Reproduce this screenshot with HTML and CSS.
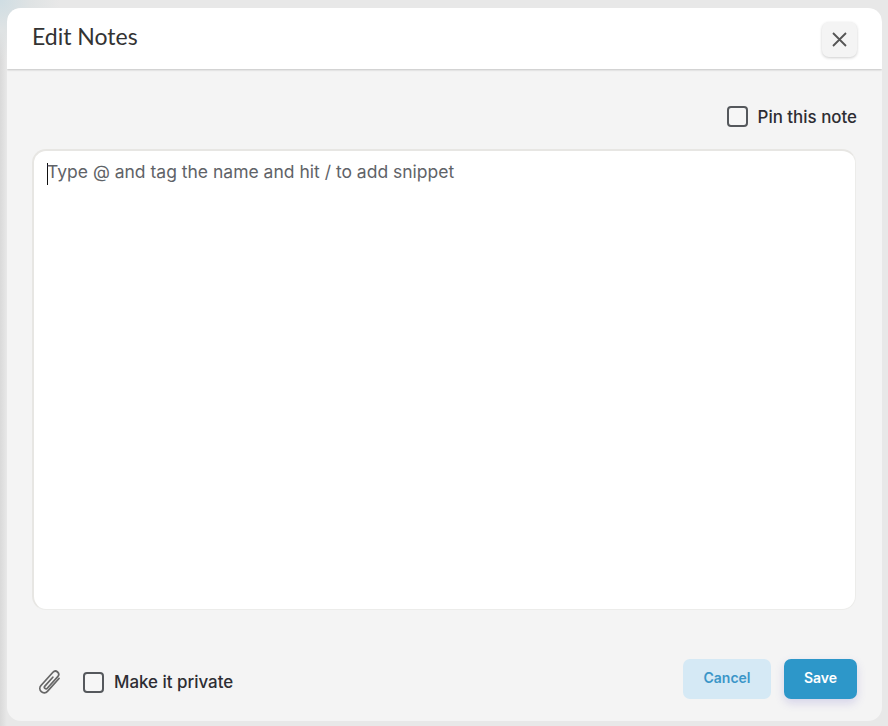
FILE: index.html
```html
<!DOCTYPE html>
<html lang="en">
<head>
<meta charset="utf-8">
<title>Edit Notes</title>
<link rel="stylesheet" href="styles.css">
</head>
<body>
<div class="modal">
  <header class="modal-header">
    <h1 class="modal-title">Edit Notes</h1>
    <button class="close-btn" aria-label="Close">
      <svg width="15" height="15" viewBox="0 0 15 15"><path d="M1 1 14 14M14 1 1 14" fill="none" stroke="#555" stroke-width="1.8"/></svg>
    </button>
  </header>
  <main class="modal-body">
    <div class="pin-row">
      <label class="check"><span class="box"></span><span>Pin this note</span></label>
    </div>
    <div class="editor">
      <span class="caret"></span><span class="placeholder">Type @ and tag the name and hit / to add snippet</span>
    </div>
    <footer class="modal-footer">
      <div class="footer-left">
        <svg class="clip" width="26" height="26" viewBox="1 1 24 24"><path d="M17 5V21a4 4 0 0 1-8 0V4.5a3 3 0 0 1 6 0V19a1.5 1.5 0 0 1-3 0V8" transform="rotate(42 13 13)" fill="none" stroke="#666" stroke-width="1.6" stroke-linecap="round"/></svg>
        <label class="check"><span class="box"></span><span>Make it private</span></label>
      </div>
      <div class="footer-right">
        <button class="btn btn-cancel">Cancel</button>
        <button class="btn btn-save">Save</button>
      </div>
    </footer>
  </main>
</div>
</body>
</html>
```
FILE: styles.css
```css
* { box-sizing: border-box; }
html, body { height: 100%; }
body {
  margin: 0;
  padding: 8px 6px 5px 7px;
  overflow: hidden;
  font-family: "Inter", "Liberation Sans", sans-serif;
  background:
    radial-gradient(circle at 0 0, #cfdde3 0, #dfe3e4 30px, transparent 60px),
    linear-gradient(90deg, #d9d9d9 0, #e8e8e8 7px),
    #e4e4e4;
}
.modal {
  height: 713px;
  display: flex;
  flex-direction: column;
  background: #f4f4f4;
  border-radius: 14px;
  overflow: hidden;
}
.modal-header {
  flex: none;
  height: 61px;
  display: flex;
  align-items: center;
  justify-content: space-between;
  padding: 0 25px;
  background: #fff;
  box-shadow: 0 1px 2px rgba(0,0,0,.2);
  position: relative;
}
.modal-title {
  margin: 0 0 5px;
  font-family: "Lato", sans-serif;
  font-size: 23px;
  font-weight: 400;
  color: #333;
}
.close-btn {
  width: 35px;
  height: 35px;
  margin-top: 1px;
  display: flex;
  align-items: center;
  justify-content: center;
  padding: 0 1px 0 0;
  border: 0;
  border-radius: 7px;
  background: #f4f4f4;
  box-shadow: 0 1px 3px rgba(0,0,0,.2);
}
.modal-body {
  flex: 1;
  display: flex;
  flex-direction: column;
  padding: 0 25px;
}
.pin-row {
  height: 80px;
  padding-top: 37px;
  display: flex;
  justify-content: flex-end;
}
.check {
  display: flex;
  align-items: center;
  gap: 10px;
  height: 21px;
  font-size: 16.9px;
  font-weight: 500;
  color: #2d2d33;
}
.box {
  flex: none;
  width: 21px;
  height: 21px;
  border: 2px solid #55585c;
  border-radius: 4px;
  background: #f6f6f6;
}
.editor {
  height: 461px;
  margin-right: 1px;
  padding: 10px 13px;
  background: #fff;
  border: 1px solid #ececea;
  border-top: 2px solid #e7e6e3;
  border-left: 2px solid #e7e6e3;
  border-radius: 14px;
  display: flex;
  font-size: 17.5px;
  line-height: 22px;
  color: #5f6368;
}
.caret {
  flex: none;
  width: 1px;
  height: 22px;
  margin-top: 2px;
  background: #111;
}
.placeholder { margin-left: -1px; }
.modal-footer {
  height: 90px;
  padding-top: 49px;
  display: flex;
  align-items: flex-start;
  justify-content: space-between;
}
.footer-left {
  display: flex;
  align-items: center;
  gap: 20px;
  padding: 10px 0 0 5px;
}
.clip { flex: none; }
.footer-right { display: flex; gap: 13px; }
.btn {
  height: 40px;
  padding: 0 0 3px;
  border: 0;
  border-radius: 7px;
  font-family: inherit;
  font-size: 14px;
  font-weight: 600;
}
.btn-cancel { width: 88px; background: #d5e9f5; color: #3b96c8; }
.btn-save {
  width: 73px;
  background: #2d97c9;
  color: #fff;
  box-shadow: 0 4px 10px rgba(90,80,190,.2);
}
```
